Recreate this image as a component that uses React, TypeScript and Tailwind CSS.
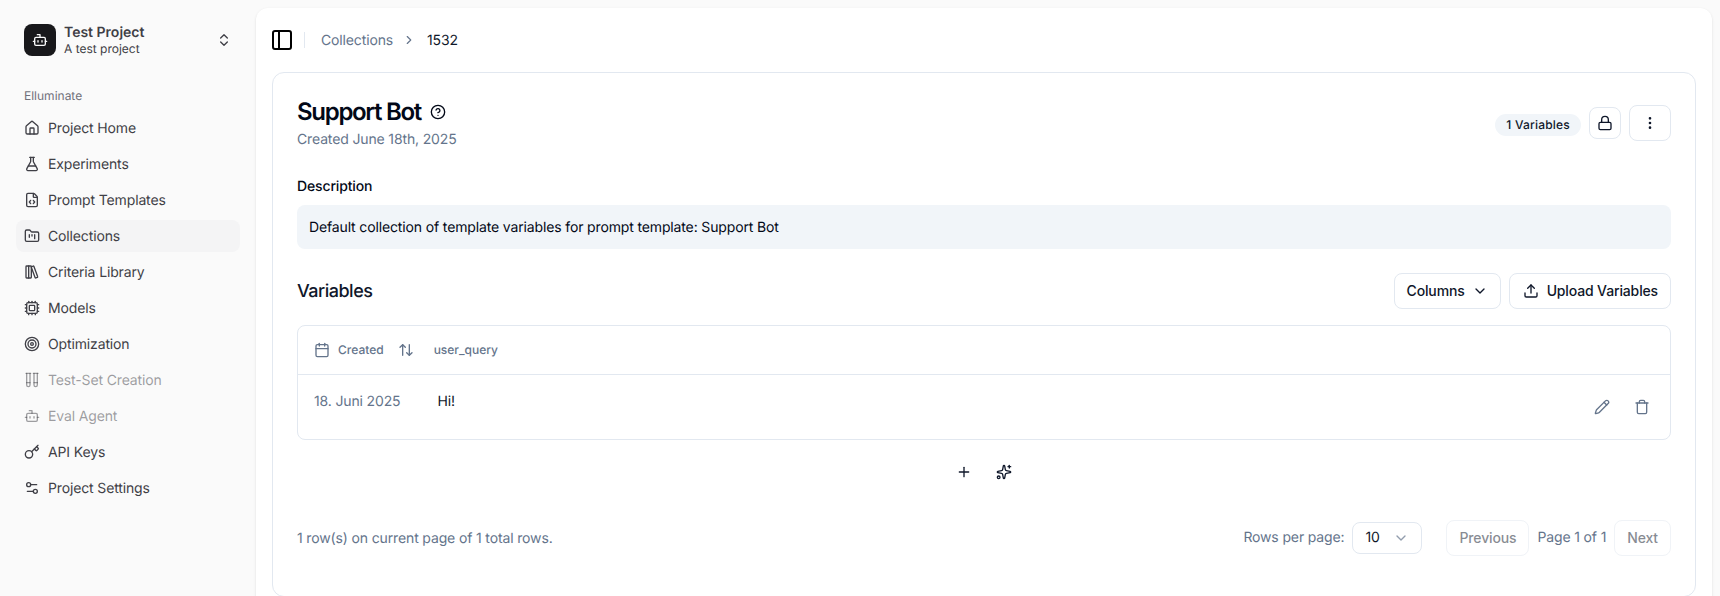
import {
  ArrowUpDown,
  Bot,
  Calendar,
  ChevronDown,
  ChevronRight,
  ChevronsUpDown,
  CircleHelp,
  Cpu,
  EllipsisVertical,
  FileCode,
  FlaskConical,
  FolderKanban,
  House,
  Key,
  LibraryBig,
  Lock,
  PanelLeft,
  Pencil,
  Plus,
  Settings2,
  Sparkles,
  Target,
  TestTubes,
  Trash,
  Upload,
} from "lucide-react";

const navItems = [
  { label: "Project Home", icon: House },
  { label: "Experiments", icon: FlaskConical },
  { label: "Prompt Templates", icon: FileCode },
  { label: "Collections", icon: FolderKanban, active: true },
  { label: "Criteria Library", icon: LibraryBig },
  { label: "Models", icon: Cpu },
  { label: "Optimization", icon: Target },
  { label: "Test-Set Creation", icon: TestTubes, disabled: true },
  { label: "Eval Agent", icon: Bot, disabled: true },
  { label: "API Keys", icon: Key },
  { label: "Project Settings", icon: Settings2 },
];

function Sidebar() {
  return (
    <aside className="w-[256px] shrink-0 bg-[#fafafa] px-4 pt-6">
      {/* Project switcher */}
      <div className="flex h-8 items-center pl-2 pr-2">
        <div className="flex h-8 w-8 items-center justify-center rounded-lg bg-[#18181b] text-[#fafafa]">
          <Bot size={16} />
        </div>
        <div className="ml-2 flex-1 pt-[2px] tracking-normal">
          <p className="text-sm leading-4 font-semibold text-[#3f3f46]">Test Project</p>
          <p className="text-xs leading-4 text-[#3f3f46]">A test project</p>
        </div>
        <ChevronsUpDown size={16} className="text-[#3f3f46]" />
      </div>

      <p className="mt-[32px] flex h-4 items-center pl-2 text-xs tracking-normal text-[#71717a]">Elluminate</p>

      {/* Nav */}
      <nav className="mt-[8px] flex flex-col gap-1">
        {navItems.map((item) => (
          <div
            key={item.label}
            className={`flex h-8 items-center gap-2 rounded-lg px-2 text-sm ${
              item.active ? "bg-[#f4f4f5]" : ""
            } ${item.disabled ? "text-[#3f3f46]/50" : "text-[#3f3f46]"}`}
          >
            <item.icon size={16} />
            <span className="pt-px">{item.label}</span>
          </div>
        ))}
      </nav>
    </aside>
  );
}

function Pagination() {
  return (
    <div className="mt-[40px] flex items-center justify-between">
      <p className="pt-px text-sm text-[#64748b]">1 row(s) on current page of 1 total rows.</p>
      <div className="flex items-center">
        <span className="text-sm text-[#64748b]">Rows per page:</span>
        <div className="ml-2 flex h-8 w-[70px] items-center justify-between rounded-lg border border-[#e2e8f0] px-3 text-sm text-[#0f172a]">
          10
          <ChevronDown size={16} className="text-[#64748b] opacity-70" />
        </div>
        <button className="ml-6 h-9 rounded-lg border border-[#e2e8f0] px-3 text-sm font-medium text-[#0f172a] opacity-50">
          Previous
        </button>
        <span className="mx-2 text-sm text-[#64748b]">Page 1 of 1</span>
        <button className="h-9 rounded-lg border border-[#e2e8f0] px-3 text-sm font-medium text-[#0f172a] opacity-50">
          Next
        </button>
      </div>
    </div>
  );
}

export default function App() {
  return (
    <div className="flex h-screen overflow-hidden bg-[#fafafa] font-['Inter',sans-serif] tracking-[-0.14px] [text-rendering:geometricPrecision]">
      <Sidebar />

      <main className="mr-2 mt-2 h-[600px] flex-1 rounded-xl bg-white px-4 shadow-sm">
        {/* Breadcrumb */}
        <header className="flex h-16 items-center">
          <PanelLeft size={24} className="-ml-[2px] text-black" />
          <div className="ml-[10px] h-4 w-px bg-[#e2e8f0]" />
          <span className="ml-4 pt-px text-sm text-[#64748b]">Collections</span>
          <ChevronRight size={14} className="ml-[9px] text-[#64748b]" />
          <span className="ml-[11px] pt-px text-sm text-[#0f172a]">1532</span>
        </header>

        <section className="rounded-xl border border-[#e2e8f0] bg-white px-6 pb-10 pt-6">
          {/* Title row */}
          <div className="flex items-start justify-between">
            <div>
              <div className="flex items-center gap-[9px]">
                <h1 className="text-2xl leading-[30px] font-semibold tracking-[-1.3px] text-[#020817]">Support Bot</h1>
                <CircleHelp size={16} className="text-[#020817]" />
              </div>
              <p className="mt-[3px] text-sm text-[#64748b]">Created June 18th, 2025</p>
            </div>
            <div className="mt-2 flex items-center">
              <span className="mt-1 rounded-full bg-[#f1f5f9] px-[11px] py-[3px] text-xs font-medium tracking-[0.2px] text-[#0f172a]">
                1 Variables
              </span>
              <button className="ml-2 flex h-[32px] w-8 items-center justify-center rounded-lg border border-[#e2e8f0] text-[#0f172a]">
                <Lock size={16} />
              </button>
              <button className="ml-2 flex h-9 w-[42px] items-center justify-center rounded-lg border border-[#e2e8f0] text-[#0f172a]">
                <EllipsisVertical size={16} />
              </button>
            </div>
          </div>

          {/* Description */}
          <p className="mt-[27px] text-sm font-medium text-[#020817]">Description</p>
          <div className="mt-2 flex h-11 items-center rounded-lg bg-[#f1f5f9] px-3 pt-px text-sm text-[#020817]">
            Default collection of template variables for prompt template: Support Bot
          </div>

          {/* Variables */}
          <div className="mt-6 flex items-center justify-between">
            <h2 className="pt-[2px] text-lg font-medium tracking-[-0.5px] text-[#0f172a]">Variables</h2>
            <div className="flex gap-2">
              <button className="flex h-9 items-center gap-[7px] rounded-lg border border-[#e2e8f0] px-3 text-sm font-medium text-[#0f172a]">
                Columns
                <ChevronDown size={16} />
              </button>
              <button className="flex h-9 items-center gap-2 rounded-lg border border-[#e2e8f0] pl-[13px] pr-3 text-sm font-medium text-[#0f172a]">
                <Upload size={16} />
                Upload Variables
              </button>
            </div>
          </div>

          {/* Table */}
          <div className="mt-4 rounded-lg border border-[#e2e8f0]">
            <div className="flex h-[49px] items-center border-b border-[#e2e8f0] pl-4 text-xs font-medium tracking-normal text-[#64748b]">
              <Calendar size={16} />
              <span className="ml-2">Created</span>
              <ArrowUpDown size={16} className="ml-[14px]" />
              <span className="ml-[20px]">user_query</span>
            </div>
            <div className="flex h-[64px] items-start pl-4 pr-4">
              <span className="mt-[17px] text-sm text-[#64748b]">18. Juni 2025</span>
              <span className="ml-[37px] mt-[17px] text-sm text-[#0f172a]">Hi!</span>
              <div className="ml-auto mt-[24px] mr-[4px] flex gap-6 text-[#64748b]">
                <Pencil size={16} />
                <Trash size={16} />
              </div>
            </div>
          </div>

          {/* Add row */}
          <div className="mt-6 flex justify-center gap-6 text-[#0f172a]">
            <Plus size={16} />
            <Sparkles size={16} />
          </div>

          <Pagination />
        </section>
      </main>
    </div>
  );
}
